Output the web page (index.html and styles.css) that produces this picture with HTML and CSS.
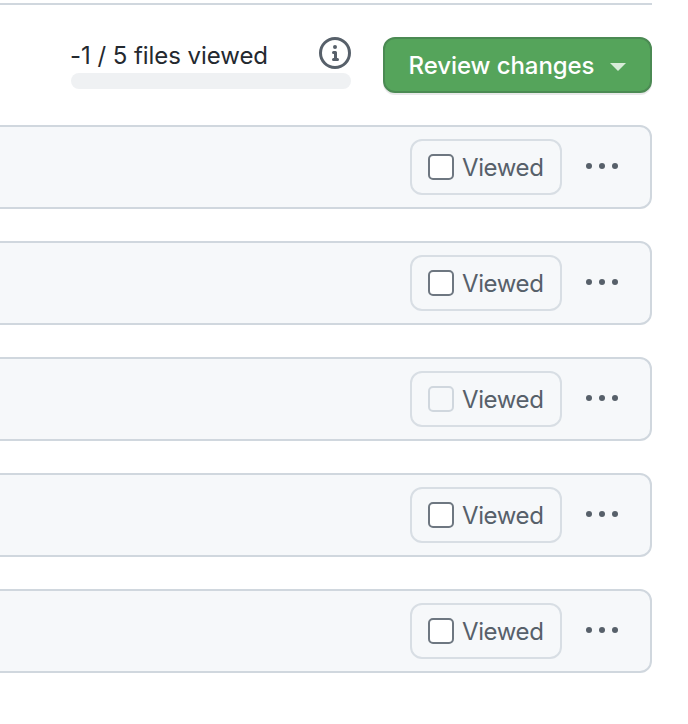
FILE: index.html
```html
<!DOCTYPE html>
<html lang="en">
<head>
<meta charset="utf-8">
<title>Files viewed</title>
<link rel="stylesheet" href="styles.css">
</head>
<body>
<main class="page">
  <div class="rule"></div>
  <div class="toolbar">
    <div class="progress">
      <div class="progress-head">
        <span class="progress-label">-1 / 5 files viewed</span>
        <svg class="info" viewBox="0 0 16 16" width="32" height="32" aria-hidden="true"><path d="M0 8a8 8 0 1 1 16 0A8 8 0 0 1 0 8Zm8-6.5a6.5 6.5 0 1 0 0 13 6.5 6.5 0 0 0 0-13ZM6.5 7.75A.75.75 0 0 1 7.25 7h1a.75.75 0 0 1 .75.75v2.75h.25a.75.75 0 0 1 0 1.5h-2a.75.75 0 0 1 0-1.5h.25v-2h-.25a.75.75 0 0 1-.75-.75ZM8 6a1 1 0 1 1 0-2 1 1 0 0 1 0 2Z"/></svg>
      </div>
      <div class="progress-track"></div>
    </div>
    <button class="review" type="button">Review changes<span class="caret"></span></button>
  </div>
  <div class="files">
    <div class="file">
      <label class="viewed"><span class="check"></span>Viewed</label>
      <span class="more"><i></i><i></i><i></i></span>
    </div>
    <div class="file">
      <label class="viewed"><span class="check"></span>Viewed</label>
      <span class="more"><i></i><i></i><i></i></span>
    </div>
    <div class="file">
      <label class="viewed"><span class="check check-disabled"></span>Viewed</label>
      <span class="more"><i></i><i></i><i></i></span>
    </div>
    <div class="file">
      <label class="viewed"><span class="check"></span>Viewed</label>
      <span class="more"><i></i><i></i><i></i></span>
    </div>
    <div class="file">
      <label class="viewed"><span class="check"></span>Viewed</label>
      <span class="more"><i></i><i></i><i></i></span>
    </div>
  </div>
</main>
</body>
</html>
```
FILE: styles.css
```css
html, body {
  margin: 0;
  background: #fff;
}
body {
  font-family: Inter, "Liberation Sans", sans-serif;
  overflow: hidden;
}
.page {
  width: 652px;
  height: 724px;
  padding-top: 3px;
  box-sizing: border-box;
}
.rule {
  height: 2px;
  background: #d0d7de;
}
.toolbar {
  display: flex;
  align-items: flex-start;
  justify-content: flex-end;
  margin-top: 32px;
  height: 56px;
}
.progress {
  width: 280px;
  display: flex;
  flex-direction: column;
  margin-right: 32px;
}
.progress-head {
  height: 36px;
  display: flex;
  justify-content: space-between;
  align-items: flex-start;
}
.progress-label {
  font-size: 24px;
  line-height: 38px;
  letter-spacing: -0.05px;
  margin-left: -1px;
  color: #24292f;
}
.progress-track {
  height: 16px;
  border-radius: 8px;
  background: #eff1f3;
}
.info {
  fill: #57606a;
}
.review {
  width: 269px;
  height: 56px;
  box-sizing: border-box;
  display: flex;
  align-items: center;
  justify-content: center;
  gap: 16px;
  border: 2px solid #4b8a53;
  border-radius: 12px;
  background: #55a45b;
  color: #fff;
  font: 500 24px Inter, "Liberation Sans", sans-serif;
  letter-spacing: -0.07px;
  box-shadow: 0 2px 0 rgba(27, 31, 36, .1);
  padding: 0;
}
.caret {
  width: 0;
  height: 0;
  border-left: 8px solid transparent;
  border-right: 8px solid transparent;
  border-top: 8px solid #d8ecd9;
  margin-top: 4px;
}
.files {
  display: flex;
  flex-direction: column;
  gap: 32px;
  margin-top: 32px;
  margin-left: -20px;
}
.file {
  height: 84px;
  box-sizing: border-box;
  display: flex;
  align-items: center;
  justify-content: flex-end;
  border: 2px solid #d0d7de;
  border-radius: 12px;
  background: #f6f8fa;
  padding-right: 32px;
}
.viewed {
  width: 152px;
  height: 56px;
  box-sizing: border-box;
  display: flex;
  align-items: center;
  gap: 8px;
  padding-left: 16px;
  border: 2px solid #d8dee4;
  border-radius: 12px;
  color: #57606a;
  font-size: 24px;
  letter-spacing: -0.4px;
}
.check {
  width: 26px;
  height: 26px;
  box-sizing: border-box;
  border: 2px solid #6e7781;
  border-radius: 5px;
  background: #fff;
}
.check-disabled {
  border-color: #d0d7de;
  background: #f6f8fa;
}
.more {
  display: flex;
  gap: 7px;
  margin-left: 24px;
  margin-top: -2px;
}
.more i {
  width: 6px;
  height: 6px;
  border-radius: 50%;
  background: #57606a;
}
```
